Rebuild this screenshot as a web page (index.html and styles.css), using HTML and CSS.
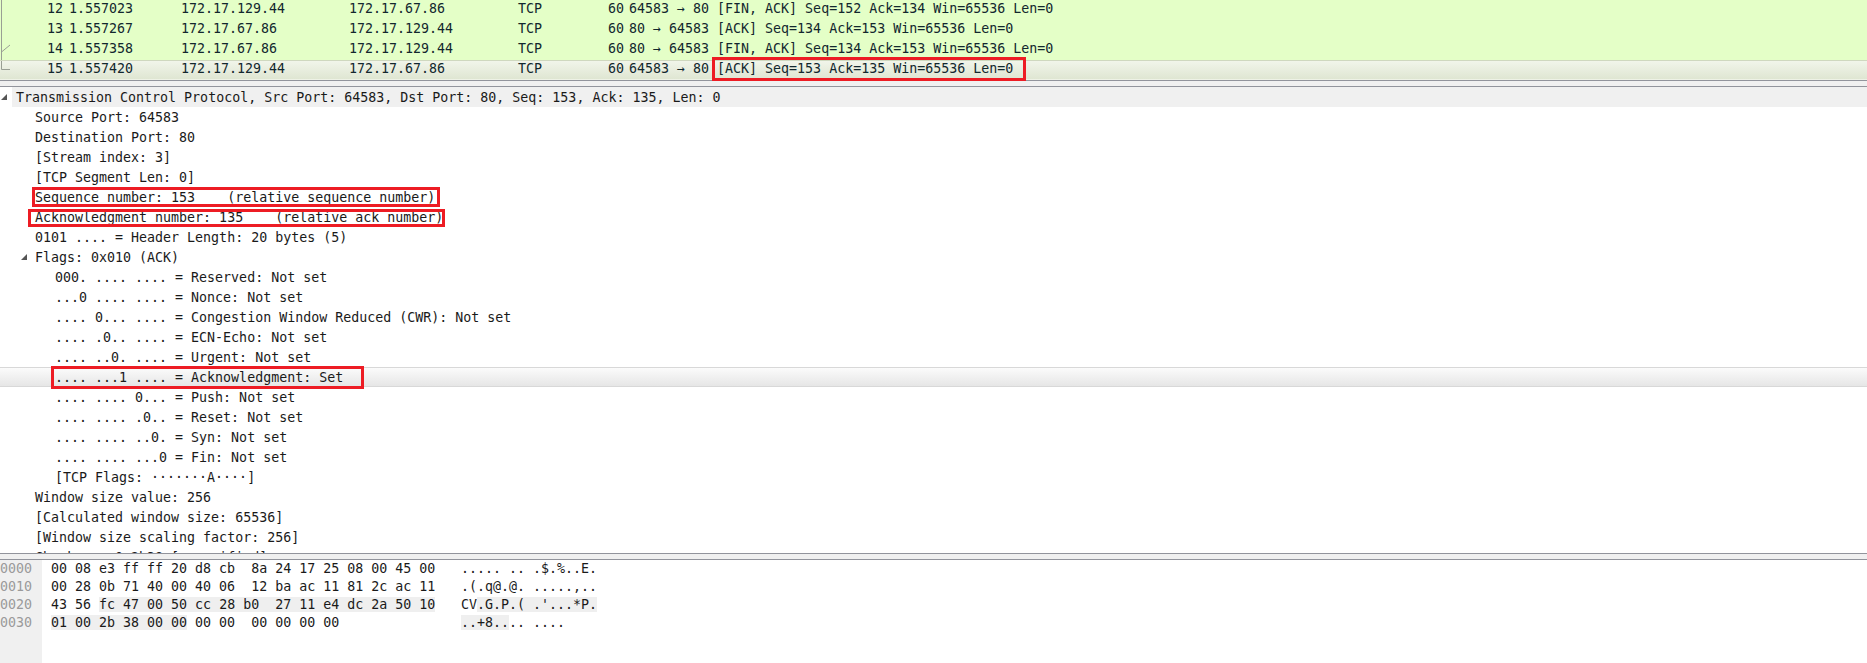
FILE: index.html
```html
<!DOCTYPE html>
<html lang="en">
<head>
<meta charset="utf-8">
<title>Wireshark TCP capture</title>
<link rel="stylesheet" href="styles.css">
</head>
<body>
<div class="app">
  <section class="list">
    <div class="pkt">
      <svg class="rel" width="12" height="20" viewBox="0 0 12 20"><path d="M1.5 0V20"/></svg>
      <span class="no">12</span><span>1.557023</span><span>172.17.129.44</span><span>172.17.67.86</span><span>TCP</span><span class="len">60</span><span class="info">64583 → 80 [FIN, ACK] Seq=152 Ack=134 Win=65536 Len=0</span>
    </div>
    <div class="pkt">
      <svg class="rel" width="12" height="20" viewBox="0 0 12 20"><path d="M1.5 0V20"/></svg>
      <span class="no">13</span><span>1.557267</span><span>172.17.67.86</span><span>172.17.129.44</span><span>TCP</span><span class="len">60</span><span class="info">80 → 64583 [ACK] Seq=134 Ack=153 Win=65536 Len=0</span>
    </div>
    <div class="pkt">
      <svg class="rel" width="12" height="20" viewBox="0 0 12 20"><path d="M1.5 0V20M1.5 12L10 5"/></svg>
      <span class="no">14</span><span>1.557358</span><span>172.17.67.86</span><span>172.17.129.44</span><span>TCP</span><span class="len">60</span><span class="info">80 → 64583 [FIN, ACK] Seq=134 Ack=153 Win=65536 Len=0</span>
    </div>
    <div class="pkt sel">
      <svg class="rel" width="12" height="18" viewBox="0 0 12 18"><path d="M1.5 0V8.5H10"/></svg>
      <span class="no">15</span><span>1.557420</span><span>172.17.129.44</span><span>172.17.67.86</span><span>TCP</span><span class="len">60</span><span class="info">64583 → 80 [ACK] Seq=153 Ack=135 Win=65536 Len=0</span>
      <i class="box box-info"></i>
    </div>
  </section>
  <div class="split"></div>
  <section class="tree">
    <div class="row root"><span class="tw"></span>Transmission Control Protocol, Src Port: 64583, Dst Port: 80, Seq: 153, Ack: 135, Len: 0</div>
    <div class="row l1">Source Port: 64583</div>
    <div class="row l1">Destination Port: 80</div>
    <div class="row l1">[Stream index: 3]</div>
    <div class="row l1">[TCP Segment Len: 0]</div>
    <div class="row l1">Sequence number: 153    (relative sequence number)<i class="box box-seq"></i></div>
    <div class="row l1">Acknowledgment number: 135    (relative ack number)<i class="box box-ack"></i></div>
    <div class="row l1">0101 .... = Header Length: 20 bytes (5)</div>
    <div class="row l1 flags"><span class="tw"></span>Flags: 0x010 (ACK)</div>
    <div class="row l2">000. .... .... = Reserved: Not set</div>
    <div class="row l2">...0 .... .... = Nonce: Not set</div>
    <div class="row l2">.... 0... .... = Congestion Window Reduced (CWR): Not set</div>
    <div class="row l2">.... .0.. .... = ECN-Echo: Not set</div>
    <div class="row l2">.... ..0. .... = Urgent: Not set</div>
    <div class="row l2 cur">.... ...1 .... = Acknowledgment: Set<i class="box box-flag"></i></div>
    <div class="row l2">.... .... 0... = Push: Not set</div>
    <div class="row l2">.... .... .0.. = Reset: Not set</div>
    <div class="row l2">.... .... ..0. = Syn: Not set</div>
    <div class="row l2">.... .... ...0 = Fin: Not set</div>
    <div class="row l2">[TCP Flags: ·······A····]</div>
    <div class="row l1">Window size value: 256</div>
    <div class="row l1">[Calculated window size: 65536]</div>
    <div class="row l1">[Window size scaling factor: 256]</div>
    <div class="row l1">Checksum: 0x2b38 [unverified]</div>
  </section>
  <div class="split"></div>
  <section class="hex">
    <div class="offsets"><div>0000</div><div>0010</div><div>0020</div><div>0030</div></div>
    <div class="bytes">
      <div>00 08 e3 ff ff 20 d8 cb  8a 24 17 25 08 00 45 00</div>
      <div>00 28 0b 71 40 00 40 06  12 ba ac 11 81 2c ac 11</div>
      <div>43 56 <span class="hl">fc 47 00 50 cc 28 b0  27 11 e4 dc 2a 50 10</span></div>
      <div><span class="hl">01 00 2b 38 00 00</span> 00 00  00 00 00 00</div>
    </div>
    <div class="ascii">
      <div>..... .. .$.%..E.</div>
      <div>.(.q@.@. .....,..</div>
      <div>CV<span class="hl">.G.P.( .'...*P.</span></div>
      <div><span class="hl">..+8..</span>.. ....</div>
    </div>
  </section>
</div>
</body>
</html>
```
FILE: styles.css
```css
* { box-sizing: border-box; }
html, body { margin: 0; height: 100%; background: #fff; overflow: hidden; }
.app {
  width: 1867px;
  height: 663px;
  display: flex;
  flex-direction: column;
  font: 13.3px/20px "DejaVu Sans Mono", monospace;
  color: #1a1a1a;
}
.list { height: 80px; flex: none; }
.pkt {
  display: grid;
  grid-template-columns: 12px 51px 118px 168px 169px 89px 17px 1fr;
  height: 20px;
  line-height: 17px;
  background: #e4ffc7;
  color: #12272e;
  position: relative;
}
.pkt span { white-space: pre; }
.pkt .no { text-align: right; }
.pkt > span:nth-of-type(2) { padding-left: 6px; }
.pkt .len { text-align: right; }
.pkt .info { padding-left: 5px; }
.pkt.sel {
  background: linear-gradient(#f1f5ea, #dfe6d2);
  border-top: 1px solid #cfd8bf;
  border-bottom: 1px solid #eef2e6;
  line-height: 15px;
}
.rel { fill: none; stroke: #999f94; stroke-width: 1; display: block; }
.box { position: absolute; border: 3px solid #ed1c24; display: block; }
.box-info { left: 712px; top: -4px; width: 314px; height: 24px; }
.box-seq { left: 32px; top: 0; width: 408px; height: 20px; }
.box-ack { left: 28px; top: 2px; width: 417px; height: 18px; }
.box-flag { left: 51px; top: -2px; width: 313px; height: 23px; }
.split { flex: none; height: 7px; background: #f0f0f0; border-top: 1px solid #92949c; border-bottom: 1px solid #92949c; }
.tree { height: 466px; flex: none; overflow: hidden; }
.row { height: 20px; line-height: 22px; position: relative; white-space: pre; }
.root { margin-left: 12px; padding-left: 4px; background: #f0f0f0; }
.l1 { padding-left: 35px; }
.l2 { padding-left: 55px; }
.cur {
  background: linear-gradient(#fbfbfb, #e6e6e6);
  border-top: 1px solid #d8d8d8;
  border-bottom: 1px solid #d8d8d8;
  line-height: 20px;
}
.tw {
  position: absolute;
  width: 0;
  height: 0;
  border-style: solid;
  border-width: 0 0 6px 6px;
  border-color: transparent transparent #555 transparent;
  top: 7px;
}
.root .tw { left: -11px; }
.flags .tw { left: 21px; }
.hex { flex: 1; display: flex; line-height: 18px; min-height: 0; }
.hex div div { white-space: pre; }
.offsets { width: 42px; background: #f0f0f0; color: #9a9a9a; flex: none; }
.bytes { margin-left: 9px; flex: none; width: 410px; }
.hl { background: #efefef; }
.ascii { flex: none; }
```
